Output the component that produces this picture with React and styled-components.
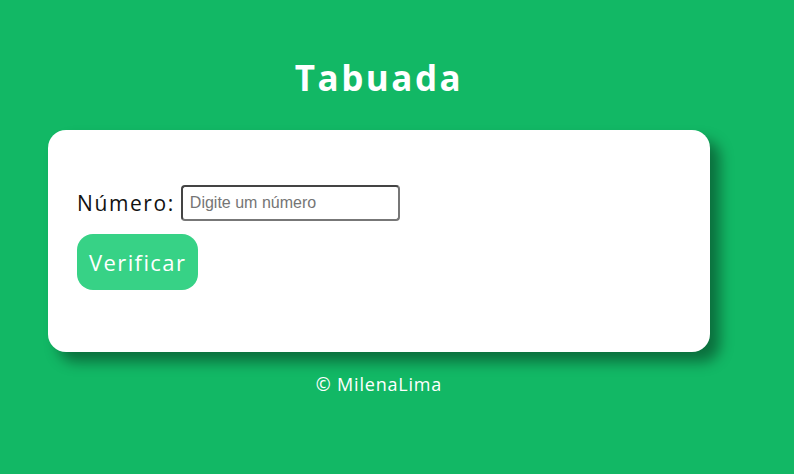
import React from "react";
import styled, { createGlobalStyle } from "styled-components";

const GlobalStyle = createGlobalStyle`
  html, body {
    margin: 0;
    padding: 0;
    background-color: #12b865;
    font-family: "Open Sans", "Liberation Sans", sans-serif;
  }
`;

const Page = styled.main`
  width: 662px;
  margin-left: 48px;
  display: flex;
  flex-direction: column;
  align-items: center;
  min-height: 474px;
`;

const Title = styled.h1`
  margin: 52px 0 0;
  height: 78px;
  color: white;
  font-size: 35px;
  font-weight: 700;
  line-height: 52px;
  letter-spacing: 2.5px;
`;

const Card = styled.section`
  box-sizing: border-box;
  width: 100%;
  height: 222px;
  background: white;
  border-radius: 18px;
  box-shadow: 10px 10px 14px rgba(0, 0, 0, 0.4);
  padding: 55px 29px;
  display: flex;
  flex-direction: column;
  gap: 13px;
`;

const Row = styled.div`
  display: flex;
  align-items: center;
  gap: 6px;
`;

const Label = styled.label`
  font-size: 21px;
  letter-spacing: 1.6px;
  color: #111;
`;

const Input = styled.input`
  box-sizing: border-box;
  width: 219px;
  height: 36px;
  border: 2px solid #444;
  border-bottom-color: #777;
  border-right-color: #777;
  border-radius: 4px;
  padding: 0 7px;
  font-family: "Liberation Sans", Arial, sans-serif;
  font-size: 16px;
  &::placeholder {
    color: #757575;
  }
`;

const Button = styled.button`
  align-self: flex-start;
  height: 56px;
  padding: 0 12px;
  border: none;
  border-radius: 16px;
  background: #37d286;
  color: white;
  font-family: "Open Sans", "Liberation Sans", sans-serif;
  font-size: 22px;
  letter-spacing: 1.4px;
  cursor: pointer;
`;

const Footer = styled.footer`
  margin-top: 20px;
  color: white;
  font-size: 18px;
  letter-spacing: 0.8px;
`;

export default function App() {
  return (
    <>
      <GlobalStyle />
      <Page>
        <Title>Tabuada</Title>
        <Card>
          <Row>
            <Label htmlFor="num">Número:</Label>
            <Input id="num" type="number" placeholder="Digite um número" />
          </Row>
          <Button>Verificar</Button>
        </Card>
        <Footer>© MilenaLima</Footer>
      </Page>
    </>
  );
}
